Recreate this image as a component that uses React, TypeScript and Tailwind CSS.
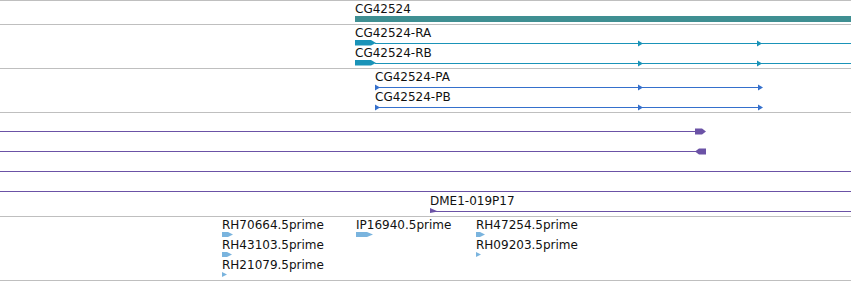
import React from "react";

const FONT = { fontFamily: '"DejaVu Sans", Verdana, sans-serif' };

function Label({ x, y, text }: { x: number; y: number; text: string }) {
  return (
    <div
      className="absolute text-[12px] leading-[14px] text-[#111] whitespace-nowrap"
      style={{ left: x, top: y, ...FONT }}
    >
      {text}
    </div>
  );
}

function Track({ h, children }: { h: number; children: React.ReactNode }) {
  return (
    <div className="relative w-full border-b border-[#bfbfbf]" style={{ height: h + 1 }}>
      {children}
    </div>
  );
}

const TEAL = "#1a93b8";
const BLUE = "#3570cc";
const PURPLE = "#6b52a6";
const EST = "#7ab4de";

function arrowR(x: number, cy: number, w = 5, hh = 3) {
  return `${x},${cy - hh} ${x + w},${cy} ${x},${cy + hh}`;
}

export default function App() {
  return (
    <div className="w-[851px] h-[281px] bg-white border-t border-[#bfbfbf] overflow-hidden">
      {/* Gene */}
      <Track h={23}>
        <svg className="absolute inset-0" width={851} height={23}>
          <rect x={355} y={15} width={496} height={6} fill="#3f8f92" />
        </svg>
        <Label x={355} y={1} text="CG42524" />
      </Track>

      {/* Transcripts */}
      <Track h={43}>
        <svg className="absolute inset-0" width={851} height={43}>
          {[0, 20].map((o) => (
            <g key={o} fill={TEAL}>
              <line x1={375} x2={851} y1={18.5 + o} y2={18.5 + o} stroke={TEAL} strokeWidth={1} />
              <polygon points={`355,${15 + o} 371,${15 + o} 376,${18 + o} 371,${20.5 + o} 355,${20.5 + o}`} />
              <polygon points={arrowR(638, 18.5 + o, 5, 3)} />
              <polygon points={arrowR(757, 18.5 + o, 5, 3)} />
            </g>
          ))}
        </svg>
        <Label x={355} y={1} text="CG42524-RA" />
        <Label x={355} y={21} text="CG42524-RB" />
      </Track>

      {/* Proteins */}
      <Track h={43}>
        <svg className="absolute inset-0" width={851} height={43}>
          {[0, 20].map((o) => (
            <g key={o} fill={BLUE}>
              <line x1={375} x2={762} y1={18.5 + o} y2={18.5 + o} stroke={BLUE} strokeWidth={1} />
              <polygon points={arrowR(375, 18.5 + o, 5, 3)} />
              <polygon points={arrowR(638, 18.5 + o, 5, 3)} />
              <polygon points={arrowR(758, 18.5 + o, 5, 3)} />
            </g>
          ))}
        </svg>
        <Label x={375} y={1} text="CG42524-PA" />
        <Label x={375} y={21} text="CG42524-PB" />
      </Track>

      {/* Alignments */}
      <Track h={103}>
        <svg className="absolute inset-0" width={851} height={103}>
          <g fill={PURPLE}>
            <line x1={0} x2={700} y1={18.5} y2={18.5} stroke={PURPLE} strokeWidth={1} />
            <polygon points="695,15.5 702,15.5 706,18.5 702,21.5 695,21.5" />
            <line x1={0} x2={706} y1={38.5} y2={38.5} stroke={PURPLE} strokeWidth={1} />
            <polygon points="695,38.5 699,35.5 706,35.5 706,41.5 699,41.5" />
            <line x1={0} x2={851} y1={58.5} y2={58.5} stroke={PURPLE} strokeWidth={1} />
            <line x1={0} x2={851} y1={78.5} y2={78.5} stroke={PURPLE} strokeWidth={1} />
            <line x1={430} x2={851} y1={98.5} y2={98.5} stroke={PURPLE} strokeWidth={1} />
            <polygon points="430,95 438,98.5 430,100" />
          </g>
        </svg>
        <Label x={430} y={81} text="DME1-019P17" />
      </Track>

      {/* ESTs */}
      <Track h={63}>
        <svg className="absolute inset-0" width={851} height={63}>
          <g fill={EST}>
            <polygon points="222,15 228,15 233,17.5 228,20 222,20" />
            <polygon points="222,35 227,35 232,37.5 227,40 222,40" />
            <polygon points="222,55 227,57.5 222,60" />
            <polygon points="356,15 367,15 373,17.5 367,20 356,20" />
            <polygon points="476,15 480,15 485,17.5 480,20 476,20" />
            <polygon points="476,35 481,37.5 476,40" />
          </g>
        </svg>
        <Label x={222} y={1} text="RH70664.5prime" />
        <Label x={222} y={21} text="RH43103.5prime" />
        <Label x={222} y={41} text="RH21079.5prime" />
        <Label x={356} y={1} text="IP16940.5prime" />
        <Label x={476} y={1} text="RH47254.5prime" />
        <Label x={476} y={21} text="RH09203.5prime" />
      </Track>
    </div>
  );
}
